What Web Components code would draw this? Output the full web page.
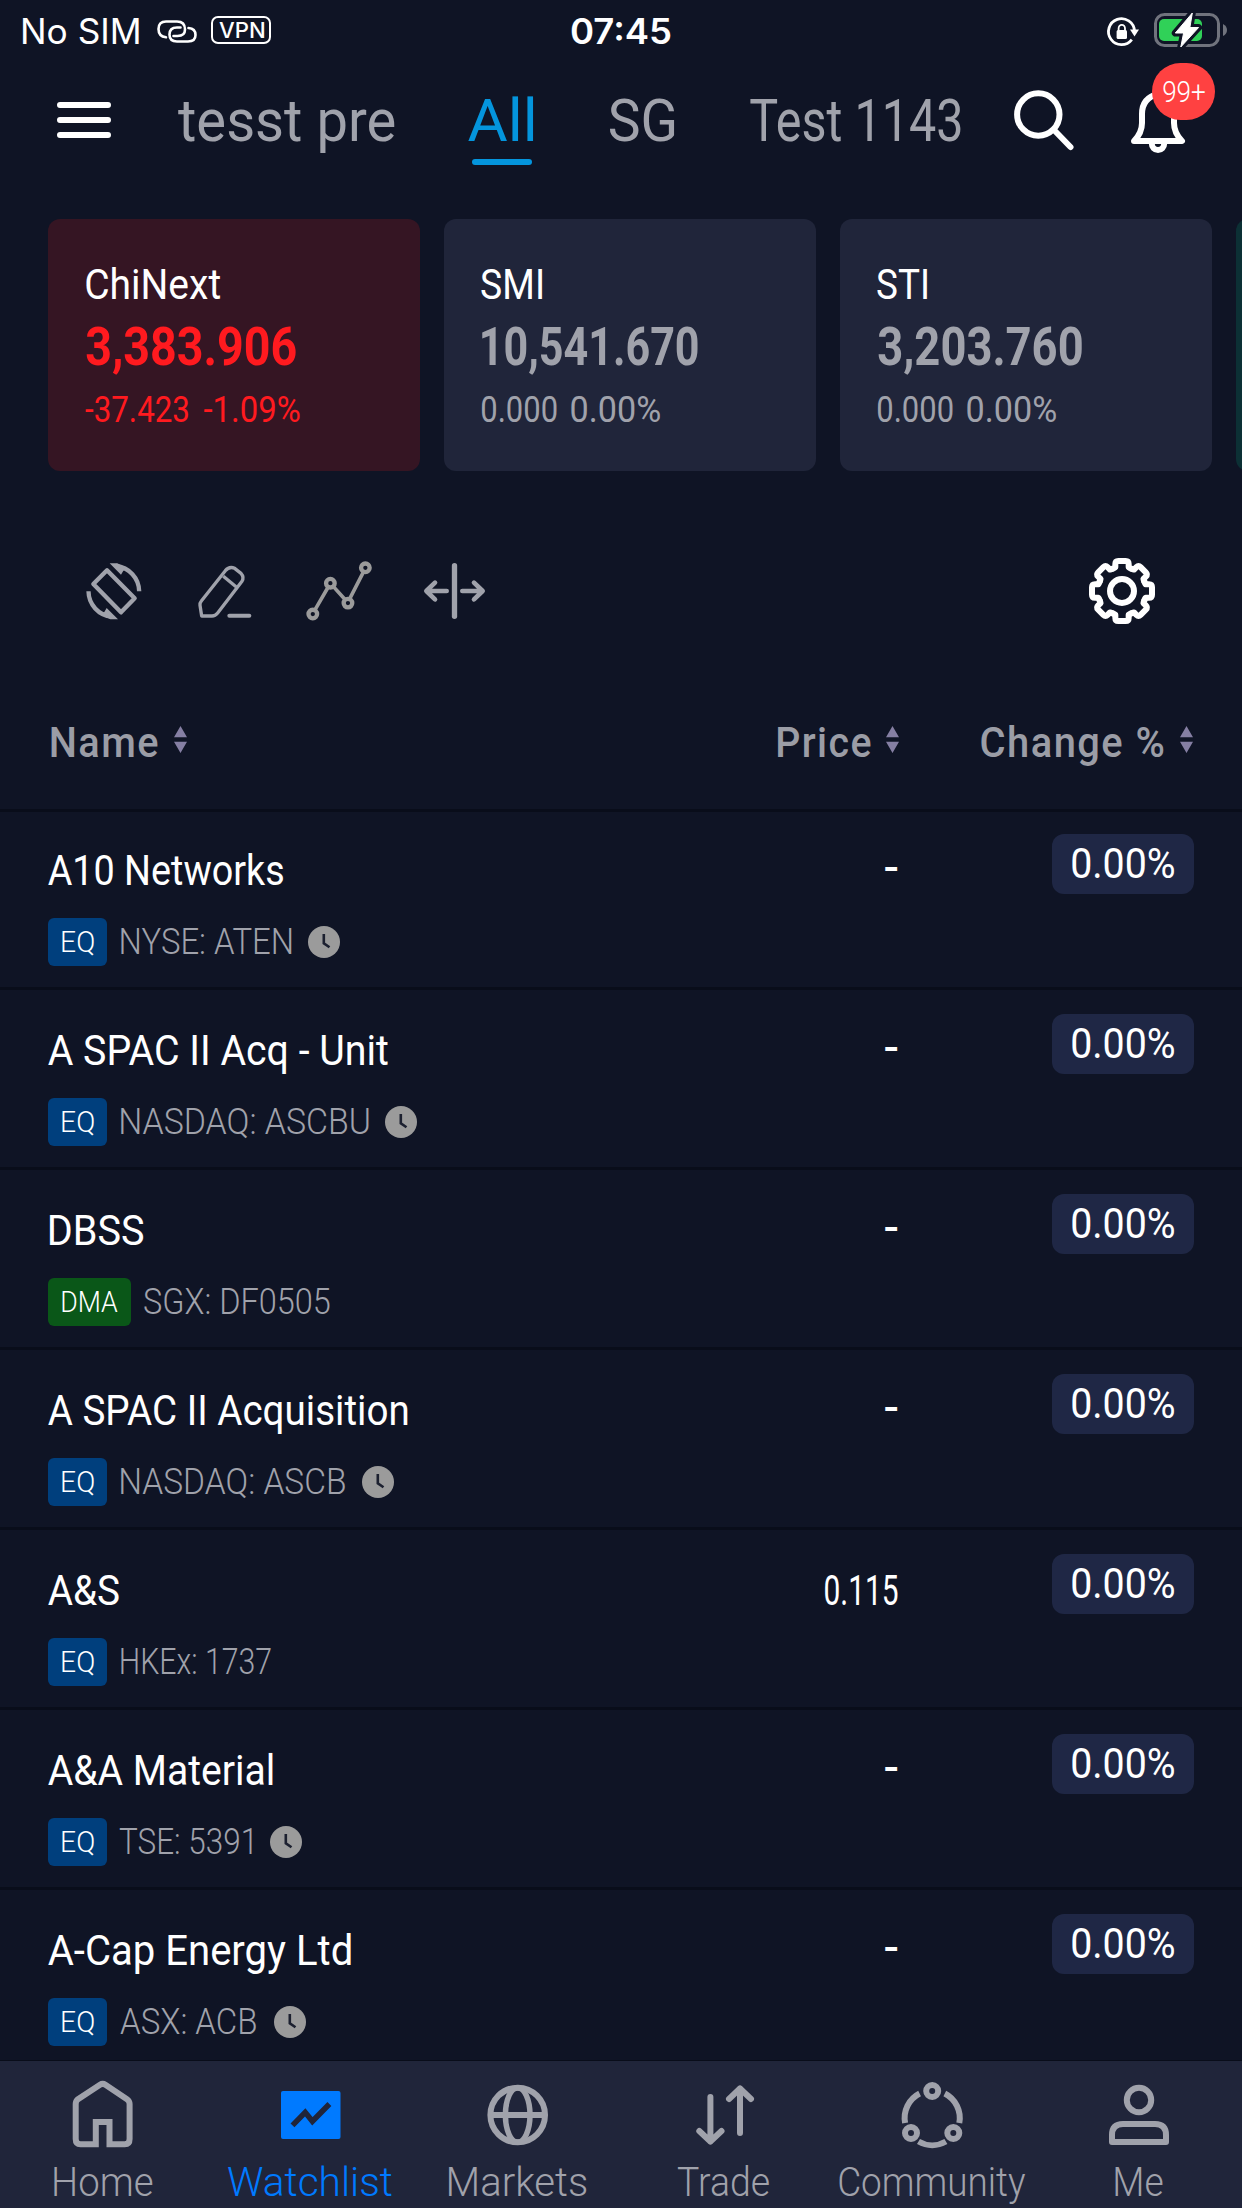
<!DOCTYPE html>
<html lang="en">
<head>
<meta charset="utf-8">
<title>Watchlist</title>
<style>
html, body { margin: 0; height: 2208px; overflow: hidden; background: #0f1425; }
body { font-family: Roboto, "Liberation Sans", sans-serif; color: #fff; }
</style>
</head>
<body>
<watch-app></watch-app>
<script>
const define = (name, html, setup) => {
  const tpl = document.createElement('template');
  tpl.innerHTML = html;
  customElements.define(name, class extends HTMLElement {
    connectedCallback() {
      if (this.shadowRoot) return;
      this.attachShadow({ mode: 'open' }).append(tpl.content.cloneNode(true));
      if (setup) setup(this, this.shadowRoot);
    }
  });
};

/* Condensed label: its glyphs are scaled horizontally to span exactly `w` pixels.
   `dx` nudges the label sideways, `ls` adds letter spacing. */
const ctx = document.createElement('canvas').getContext('2d');
define('fit-text', `<style>
  :host { display: block; flex: none; white-space: nowrap; }
  span { display: inline-block; transform-origin: 0 50%; vertical-align: top; }
</style><span></span>`, (el, root) => {
  const span = root.querySelector('span');
  const w = +el.getAttribute('w');
  const dx = +(el.getAttribute('dx') || 0);
  const ls = +(el.getAttribute('ls') || 0);
  const cs = getComputedStyle(el);
  span.textContent = el.getAttribute('text');
  span.style.letterSpacing = ls + 'px';
  ctx.font = `${cs.fontWeight} ${cs.fontSize} ${cs.fontFamily}`;
  const m = ctx.measureText(span.textContent);
  const ink = m.actualBoundingBoxLeft + m.actualBoundingBoxRight + ls * (span.textContent.length - 1);
  const k = w / ink;
  el.style.width = w + 'px';
  span.style.width = w + 'px';
  span.style.transform = `translate(${k * m.actualBoundingBoxLeft + dx}px, var(--drop, 0.6px)) scaleX(${k})`;
});

const tooth = 'M-28-67L-20-71V-81Q-20-90-11-90H11Q20-90 20-81V-71L28-67';
const ICONS = {
  link: [40, 23, '0 0 40 23', '<g fill="none" stroke="currentColor" stroke-width="2.6" stroke-linecap="round"><path d="M9 17.300Q1.500 16.500 1.500 9Q1.500 1.500 9 1.500H20Q28 1.500 28 9.500Q28 16 20.500 16H16.500"/><path d="M31.500 8Q38.500 8.500 38.500 15Q38.500 21.500 31 21.500H20Q12.500 21.500 12.500 14.500Q12.500 7.500 20 7.500H23.500"/></g>'],
  lock: [31, 29, '0 0 31 29', '<path d="M26.500 14A13 13 0 1 0 23.800 22.600" fill="none" stroke="currentColor" stroke-width="2.800"/><path d="M22 12.500H31L26.500 19.500Z" fill="currentColor"/><rect x="8.600" y="13" width="10.400" height="9" rx="1.500" fill="currentColor"/><path d="M10.600 14V11.500a3.200 3.600 0 0 1 6.400 0V14" fill="none" stroke="currentColor" stroke-width="1.800"/>'],
  battery: [74, 34, '0 0 74 34', '<rect x="1.500" y="1.500" width="63" height="31" rx="9" fill="none" stroke="#70737d" stroke-width="3"/><rect x="5" y="6" width="43" height="22" rx="5" fill="#30d158"/><path d="M69 11Q73 13 73 17Q73 21 69 23Z" fill="#70737d"/><path d="M38.300 0L21.300 20H29.600L26.800 34L44.600 14.500H35.900Z" fill="#0f1425" stroke="#0f1425" stroke-width="7" stroke-linejoin="round"/><path d="M38.300 0L21.300 20H29.600L26.800 34L44.600 14.500H35.900Z" fill="#fff" stroke="#fff" stroke-width="1" stroke-linejoin="round"/>'],
  menu: [54, 36, '0 0 54 36', '<path d="M3 3H51M3 18H51M3 33H51" stroke="currentColor" stroke-width="6" stroke-linecap="round"/>'],
  search: [58, 58, '0 0 58 58', '<g fill="none" stroke="currentColor" stroke-width="6" stroke-linecap="round"><circle cx="24.300" cy="24.500" r="21.200"/><path d="M41 41L56.500 57"/></g>'],
  bell: [54, 68, '0 0 54 68', '<g fill="none" stroke="currentColor" stroke-width="6" stroke-linejoin="round"><path d="M3 55Q11 47 11 37V28Q11 12 27 8Q43 12 43 28V37Q43 47 51 55Z"/><path d="M20.800 57.500a6.200 6.500 0 0 0 12.400 0"/></g>'],
  rotate: [56, 57, '138 98 168 171', '<path d="M201 120L160 161L243 246L284 204Z" fill="none" stroke="currentColor" stroke-width="13" stroke-linejoin="round"/><path d="M297.500 183A77 77 0 0 0 228 107" fill="none" stroke="currentColor" stroke-width="13"/><path d="M209 99H232L264 115L250 121L243 133Z" fill="currentColor"/><g transform="rotate(180 221.500 183)"><path d="M297.500 183A77 77 0 0 0 228 107" fill="none" stroke="currentColor" stroke-width="13"/><path d="M209 99H232L264 115L250 121L243 133Z" fill="currentColor"/></g>'],
  edit: [54, 53, '473 103 162 159', '<g fill="none" stroke="currentColor" stroke-width="10" stroke-linejoin="round"><path d="M484 256L479 224Q478 217 483 211L555 120Q567 106 583 113L602 128Q612 139 605 152L532 247Q525 256 515 256Z"/><path d="M549 137L588 169"/><path d="M567 255H627" stroke-width="12" stroke-linecap="round"/></g>'],
  trend: [66, 60, '797 93 199 180', '<g fill="none" stroke="currentColor"><path d="M824 240L864 171M879 169L914 208M929 206L970 126" stroke-width="11"/><g stroke-width="13"><circle cx="817.500" cy="252.500" r="13"/><circle cx="870.500" cy="159.500" r="13"/><circle cx="923.500" cy="219.500" r="13"/><circle cx="976" cy="113" r="13"/></g></g>'],
  split: [61, 56, '1152 99 183 168', '<g fill="none" stroke="currentColor" stroke-width="14" stroke-linecap="round" stroke-linejoin="round"><path d="M1243.500 107V259" stroke-width="16"/><path d="M1162 183H1220M1185 158L1159 183L1185 208M1267 183H1325M1302 158L1328 183L1302 208"/></g>'],
  gear: [66, 66, '-99 -99 198 198', '<g fill="none" stroke="currentColor" stroke-width="18" stroke-linecap="round" stroke-linejoin="round"><circle r="36"/>' + [0, 45, 90, 135, 180, 225, 270, 315].map(a => `<path transform="rotate(${a})" d="${tooth}"/>`).join('') + '</g>'],
  sort: [13, 27, '0 0 13 27', '<path d="M6.500 0L13 11.300H0Z M0 15.700H13L6.500 27Z" fill="#857fa3"/>'],
  clock: [32, 32, '0 0 32 32', '<circle cx="16" cy="16" r="16" fill="#9b9b9b"/><path d="M15.800 8V17.300L21.500 21.300" fill="none" stroke="#1c2030" stroke-width="2.600"/>'],
  home: [72, 72, '0 0 72 72', '<path d="M28.800 65.200H13.500Q8.700 65.200 8.700 60V25Q8.700 22 11 20.200L33 5.800Q35.700 4 38.400 5.800L60 20.200Q62.600 22 62.600 25V60Q62.600 65.200 57.800 65.200H42.500V43H28.800Z" fill="none" stroke="currentColor" stroke-width="6"/>'],
  watch: [72, 72, '0 0 72 72', '<rect x="7" y="12" width="59.500" height="48" rx="2" fill="currentColor"/><path d="M18.500 46.300L31.200 33.300L38.400 42.300L55.400 25" fill="none" stroke="#20253a" stroke-width="5.500"/>'],
  globe: [72, 72, '0 0 72 72', '<g fill="none" stroke="currentColor" stroke-width="6"><circle cx="36.700" cy="36" r="27.300"/><ellipse cx="36.700" cy="36" rx="12.300" ry="27.300" stroke-width="5.500"/><path d="M9 36H64"/></g>'],
  trade: [72, 72, '0 0 72 72', '<g fill="none" stroke="currentColor" stroke-width="6" stroke-linecap="round" stroke-linejoin="round"><path d="M22.400 18V62.500M11.300 52L22.400 62.500L33.500 52M52 54V9.500M41 20L52 9.500L63 20"/></g>'],
  community: [72, 72, '0 0 72 72', '<g fill="none" stroke="currentColor" stroke-width="6"><circle cx="37.200" cy="12" r="6"/><circle cx="16" cy="54" r="6"/><circle cx="58.300" cy="54" r="6"/><path d="M49.800 14.500A27.500 27.500 0 0 1 64.300 44M24.600 14.500A27.500 27.500 0 0 0 10.100 44M23.500 62.500A27.500 27.500 0 0 0 50.900 62.500"/></g>'],
  me: [72, 72, '0 0 72 72', '<g fill="none" stroke="currentColor" stroke-width="6" stroke-linejoin="round"><circle cx="37" cy="21" r="12.200"/><path d="M10 63V56Q10 45 21 45H53Q64 45 64 56V63Z"/></g>']
};
define('app-icon', `<style>:host { display: block; flex: none; } svg { display: block; overflow: visible; }</style>`, (el, root) => {
  const [w, h, box, body] = ICONS[el.getAttribute('name')];
  const t = document.createElement('template');
  t.innerHTML = `<svg width="${w}" height="${h}" viewBox="${box}">${body}</svg>`;
  root.append(t.content);
});

define('status-bar', `<style>
  :host { --drop: 0px; display: grid; grid-template-columns: 1fr auto 1fr; align-items: center; height: 62px; font: 400 35px/62px Inter, sans-serif; }
  .l { display: flex; align-items: center; padding-left: 23px; }
  .r { display: flex; align-items: center; justify-content: flex-end; gap: 15px; padding-right: 14px; }
  .l app-icon { margin: 1px 14px 0 18px; }
  .vpn { box-sizing: border-box; width: 60px; height: 28px; border: 2.500px solid #fff; border-radius: 7px; display: flex; align-items: center; justify-content: center; font: 500 22px/24px Inter, sans-serif; margin-top: -2px; }
  .t { font-weight: 600; }
  .r app-icon:last-child { margin-top: -2px; }
</style>
<div class="l"><fit-text w="116" text="No SIM"></fit-text><app-icon name="link"></app-icon><div class="vpn"><fit-text w="45" text="VPN"></fit-text></div></div>
<fit-text class="t" w="100" text="07:45"></fit-text>
<div class="r"><app-icon name="lock"></app-icon><app-icon name="battery"></app-icon></div>`);

define('list-tab', `<style>
  :host { display: flex; flex-direction: column; align-items: center; flex: none; height: 84px; padding-top: 6px; color: #a0a2ab; font: 400 60px/78px Roboto, sans-serif; }
  :host([active]) { color: #0495dd; }
  i { width: 60px; height: 6px; border-radius: 3px; margin-left: 2px; }
  :host([active]) i { background: currentColor; }
</style><slot></slot><i></i>`);

define('top-nav', `<style>
  :host { display: flex; align-items: center; height: 116px; padding-left: 57px; }
  .s { margin: -3px 59px 0 54px; }
  .bell { position: relative; }
  .badge { position: absolute; left: 21px; top: -23px; width: 63px; height: 57px; border-radius: 29px; background: #ff4141; display: flex; align-items: center; justify-content: center; font: 300 30px/56px Roboto, sans-serif; --drop: 0px; }
</style>
<app-icon name="menu"></app-icon>
<list-tab style="margin-left:67px"><fit-text w="216.500" text="tesst pre"></fit-text></list-tab>
<list-tab active style="margin-left:73.500px"><fit-text w="66.500" text="All" dx="-0.5"></fit-text></list-tab>
<list-tab style="margin-left:75px"><fit-text w="65" text="SG" dx="-0.5"></fit-text></list-tab>
<list-tab style="margin-left:75px"><fit-text w="210.500" text="Test 1143"></fit-text></list-tab>
<app-icon class="s" name="search"></app-icon>
<div class="bell"><app-icon name="bell"></app-icon><div class="badge"><fit-text w="42" text="99+"></fit-text></div></div>`);

define('index-card', `<style>
  :host { box-sizing: border-box; flex: none; display: block; width: 372px; height: 252px; padding: 41px 0 0 37.500px; border-radius: 12px; background: #20253a; color: #a0a2ab; }
  :host([down]) { background: #351523; color: #ff1a1f; }
  :host([up]) { background: #0c3035; }
  .n { font-size: 42px; line-height: 48px; color: #fff; }
  .v { --drop: 0px; font-size: 54px; line-height: 64px; font-weight: 700; margin-top: 6.500px; }
  .c { --drop: 0px; display: flex; font-size: 36px; line-height: 44px; margin-top: 9.500px; gap: 15px; }
</style><div class="n"><slot name="name"></slot></div><div class="v"><slot name="value"></slot></div><div class="c"><slot></slot></div>`);

define('index-strip', `<style>
  :host { display: flex; gap: 24px; margin-top: 41px; padding-left: 48px; overflow: hidden; flex: none; }
</style>
<index-card down><fit-text slot="name" w="134.500" text="ChiNext"></fit-text><fit-text slot="value" w="210.500" text="3,383.906"></fit-text><fit-text w="103" text="-37.423" dx="-1"></fit-text><fit-text w="96" text="-1.09%" dx="-0.5"></fit-text></index-card>
<index-card><fit-text slot="name" w="61" text="SMI" dx="-1"></fit-text><fit-text slot="value" w="216" text="10,541.670"></fit-text><fit-text w="75" text="0.000"></fit-text><fit-text w="88.500" text="0.00%" dx="-0.5"></fit-text></index-card>
<index-card><fit-text slot="name" w="50" text="STI" dx="-1"></fit-text><fit-text slot="value" w="204" text="3,203.760"></fit-text><fit-text w="75" text="0.000"></fit-text><fit-text w="88.500" text="0.00%" dx="-0.5"></fit-text></index-card>
<index-card up></index-card>`);

define('tool-bar', `<style>
  :host { display: flex; align-items: center; height: 240px; padding: 0 87px 0 86px; color: #a0a2ab; flex: none; }
  app-icon:nth-of-type(2) { margin-left: 56px; }
  app-icon:nth-of-type(3) { margin-left: 54px; color: #9b9b9b; }
  app-icon:nth-of-type(4) { margin-left: 52px; }
  app-icon:last-child { margin-left: auto; color: #fff; }
</style>
<app-icon name="rotate"></app-icon><app-icon name="edit"></app-icon><app-icon name="trend"></app-icon><app-icon name="split"></app-icon><app-icon name="gear"></app-icon>`);

define('sort-label', `<style>
  :host { display: flex; gap: 16px; font: 500 42px/48px Roboto, sans-serif; color: #9b9da6; --drop: 0.3px; }
  app-icon { margin-top: 7.400px; }
</style><slot></slot><app-icon name="sort"></app-icon>`);

define('list-header', `<style>
  :host { display: flex; height: 90.400px; padding: 7.600px 49px 0 51px; border-bottom: 3px solid #090d1a; flex: none; }
  .p { margin: 0 83px 0 auto; }
</style>
<sort-label><fit-text w="106.500" text="Name" ls="1.5" dx="0.5"></fit-text></sort-label>
<sort-label class="p"><fit-text w="93" text="Price" ls="1.5" dx="1"></fit-text></sort-label>
<sort-label><fit-text w="182.500" text="Change %" ls="1.5" dx="-0.5"></fit-text></sort-label>`);

define('kind-badge', `<style>
  :host { display: flex; height: 48px; padding: 0 13.500px; border-radius: 6px; background: #003f7d; font: 350 30px/48px Roboto, sans-serif; color: #fff; --drop: 0px; }
  :host([dma]) { background: #0a5718; }
</style><slot></slot>`);

define('stock-row', `<style>
  :host { box-sizing: border-box; display: flex; align-items: flex-start; height: 180px; padding: 24px 48px 0; border-bottom: 3px solid #090d1a; flex: none; }
  .info { flex: 1; display: flex; flex-direction: column; gap: 24px; padding-top: 12px; font-size: 42px; line-height: 48px; }
  .meta { --drop: 0.2px; display: flex; align-items: center; gap: 13.500px; font-size: 36px; font-weight: 350; color: #a0a2ab; }
  app-icon { margin-left: 3px; }
  .price { padding-top: 12px; margin-right: 154px; font-size: 42px; line-height: 48px; }
  .dash { padding-top: 9px; font-weight: 500; }
  .pill { --drop: 0.2px; box-sizing: border-box; width: 142px; height: 60px; padding-left: 20px; border-radius: 12px; background: #1f2745; font-size: 42px; line-height: 60px; }
</style>
<div class="info"><div class="title"></div><div class="meta"></div></div><div class="price"></div>
<div class="pill"><fit-text w="102" text="0.00%"></fit-text></div>`, (el, root) => {
  const a = n => el.getAttribute(n);
  const dma = el.hasAttribute('dma');
  const put = (sel, html) => { root.querySelector(sel).innerHTML = html; };
  put('.title', `<fit-text w="${a('nw')}" dx="-0.3" text="${a('name').replace('&', '&amp;')}"></fit-text>`);
  root.querySelector('.title').style.paddingLeft = dma ? '2px' : '0';
  put('.meta', `<kind-badge ${dma ? 'dma' : ''}><fit-text w="${dma ? 56 : 32}" text="${dma ? 'DMA' : 'EQ'}"></fit-text></kind-badge><fit-text w="${a('cw')}" dx="${a('dx') || 0}" text="${a('code')}"></fit-text>${el.hasAttribute('delayed') ? '<app-icon name="clock"></app-icon>' : ''}`);
  const price = a('price');
  if (!price) root.querySelector('.price').classList.add('dash');
  put('.price', price ? `<fit-text w="72.500" dx="-1" text="${price}"></fit-text>` : '<fit-text w="13" text="-" dx="-0.5"></fit-text>');
});

define('stock-list', `<style>
  :host { flex: 1; min-height: 0; overflow: hidden; display: flex; flex-direction: column; }
  stock-row:first-of-type { margin-top: -2px; }
</style>
<stock-row name="A10 Networks" nw="235.500" code="NYSE: ATEN" cw="170.500" dx="0.3" delayed></stock-row>
<stock-row name="A SPAC II Acq - Unit" nw="340.500" code="NASDAQ: ASCBU" cw="247.500" delayed></stock-row>
<stock-row name="DBSS" nw="94" code="SGX: DF0505" cw="186" dx="-1" dma></stock-row>
<stock-row name="A SPAC II Acquisition" nw="360" code="NASDAQ: ASCB" cw="224.500" delayed></stock-row>
<stock-row name="A&amp;S" nw="71.500" code="HKEx: 1737" cw="150" dx="0.3" price="0.115"></stock-row>
<stock-row name="A&amp;A Material" nw="225.500" code="TSE: 5391" cw="133" dx="-2" delayed></stock-row>
<stock-row name="A-Cap Energy Ltd" nw="303" code="ASX: ACB" cw="136.500" dx="-1" delayed></stock-row>`);

define('nav-item', `<style>
  :host { display: flex; flex-direction: column; align-items: center; gap: 8px; padding-top: 18px; color: #a0a2ab; font: 300 40px/46px Roboto, sans-serif; --drop: 1px; }
  :host([active]) { color: #007aff; }
</style><slot></slot>`);

define('bottom-nav', `<style>
  :host { display: grid; grid-template-columns: repeat(6, 1fr); height: 147px; background: #20253a; flex: none; box-shadow: 0 -1px #090d1a; position: relative; }
  app-icon { margin-left: -1px; }
</style>
<nav-item><app-icon name="home"></app-icon><fit-text w="99" text="Home"></fit-text></nav-item>
<nav-item active><app-icon name="watch"></app-icon><fit-text w="164" text="Watchlist" dx="-1"></fit-text></nav-item>
<nav-item><app-icon name="globe"></app-icon><fit-text w="138.500" text="Markets" dx="0.5"></fit-text></nav-item>
<nav-item><app-icon name="trade"></app-icon><fit-text w="91.500" text="Trade" dx="-1"></fit-text></nav-item>
<nav-item><app-icon name="community"></app-icon><fit-text w="186.500" text="Community" dx="1"></fit-text></nav-item>
<nav-item><app-icon name="me"></app-icon><fit-text w="48" text="Me"></fit-text></nav-item>`);

define('watch-app', `<style>
  :host { display: flex; flex-direction: column; width: 1242px; height: 2208px; overflow: hidden; background: #0f1425; }
  status-bar, top-nav { flex: none; }
</style>
<status-bar></status-bar><top-nav></top-nav><index-strip></index-strip><tool-bar></tool-bar><list-header></list-header><stock-list></stock-list><bottom-nav></bottom-nav>`);
</script>
</body>
</html>
